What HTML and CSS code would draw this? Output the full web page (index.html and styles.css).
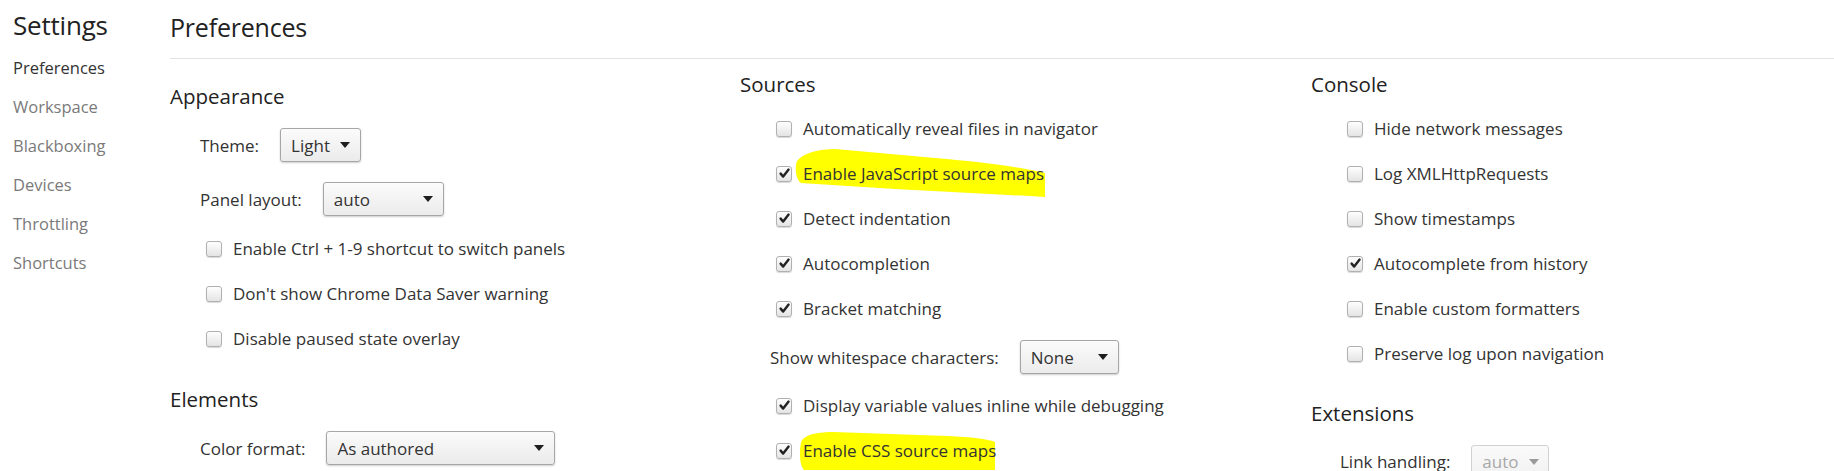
FILE: index.html
```html
<!DOCTYPE html>
<html>
<head>
<meta charset="utf-8">
<link rel="stylesheet" href="styles.css">
</head>
<body>
<div class="app">
  <nav class="sidebar">
    <div class="side-title">Settings</div>
    <ul class="side-list">
      <li class="active">Preferences</li>
      <li>Workspace</li>
      <li>Blackboxing</li>
      <li>Devices</li>
      <li>Throttling</li>
      <li>Shortcuts</li>
    </ul>
  </nav>
  <main class="main">
    <header class="header"><h1>Preferences</h1></header>
    <div class="columns">
      <section class="col col-first">
        <h2 class="sec-title">Appearance</h2>
        <div class="select-row tall">
          <span class="lbl">Theme:</span>
          <span class="select w-light"><span class="val">Light</span><span class="arrow"></span></span>
        </div>
        <div class="select-row tall">
          <span class="lbl">Panel layout:</span>
          <span class="select w-auto"><span class="val">auto</span><span class="arrow"></span></span>
        </div>
        <div class="check-row"><span class="cb"></span><span class="txt">Enable Ctrl + 1-9 shortcut to switch panels</span></div>
        <div class="check-row"><span class="cb"></span><span class="txt">Don't show Chrome Data Saver warning</span></div>
        <div class="check-row"><span class="cb"></span><span class="txt">Disable paused state overlay</span></div>
        <h2 class="sec-title sec-next">Elements</h2>
        <div class="select-row tall first-after">
          <span class="lbl">Color format:</span>
          <span class="select w-authored"><span class="val">As authored</span><span class="arrow"></span></span>
        </div>
      </section>

      <section class="col">
        <h2 class="sec-title">Sources</h2>
        <div class="check-row"><span class="cb"></span><span class="txt">Automatically reveal files in navigator</span></div>
        <div class="check-row"><span class="cb on"><svg viewBox="0 0 15 15"><path d="M3.6 7.6 L6.2 10.6 L11.6 3.6"/></svg></span><span class="txt hl hl-js">Enable JavaScript source maps<svg class="mark" viewBox="0 0 250 48" preserveAspectRatio="none"><path d="M2 12 C8 4 24 0 40 0 L140 9 C190 13 230 19 250 24 L250 48 C200 45 150 43 100 40 L6 34 C0 30 0 17 2 12 Z"/></svg></span></div>
        <div class="check-row"><span class="cb on"><svg viewBox="0 0 15 15"><path d="M3.6 7.6 L6.2 10.6 L11.6 3.6"/></svg></span><span class="txt">Detect indentation</span></div>
        <div class="check-row"><span class="cb on"><svg viewBox="0 0 15 15"><path d="M3.6 7.6 L6.2 10.6 L11.6 3.6"/></svg></span><span class="txt">Autocompletion</span></div>
        <div class="check-row"><span class="cb on"><svg viewBox="0 0 15 15"><path d="M3.6 7.6 L6.2 10.6 L11.6 3.6"/></svg></span><span class="txt">Bracket matching</span></div>
        <div class="select-row mid">
          <span class="lbl">Show whitespace characters:</span>
          <span class="select w-none"><span class="val">None</span><span class="arrow"></span></span>
        </div>
        <div class="check-row"><span class="cb on"><svg viewBox="0 0 15 15"><path d="M3.6 7.6 L6.2 10.6 L11.6 3.6"/></svg></span><span class="txt">Display variable values inline while debugging</span></div>
        <div class="check-row"><span class="cb on"><svg viewBox="0 0 15 15"><path d="M3.6 7.6 L6.2 10.6 L11.6 3.6"/></svg></span><span class="txt hl hl-css">Enable CSS source maps<svg class="mark" viewBox="0 0 198 42" preserveAspectRatio="none"><path d="M3 12 C8 6 20 4 35 4 L150 8 C175 9 190 11 198 14 L198 42 L5 42 C0 38 0 18 3 12 Z"/></svg></span></div>
      </section>

      <section class="col">
        <h2 class="sec-title">Console</h2>
        <div class="check-row"><span class="cb"></span><span class="txt">Hide network messages</span></div>
        <div class="check-row"><span class="cb"></span><span class="txt">Log XMLHttpRequests</span></div>
        <div class="check-row"><span class="cb"></span><span class="txt">Show timestamps</span></div>
        <div class="check-row"><span class="cb on"><svg viewBox="0 0 15 15"><path d="M3.6 7.6 L6.2 10.6 L11.6 3.6"/></svg></span><span class="txt">Autocomplete from history</span></div>
        <div class="check-row"><span class="cb"></span><span class="txt">Enable custom formatters</span></div>
        <div class="check-row"><span class="cb"></span><span class="txt">Preserve log upon navigation</span></div>
        <h2 class="sec-title sec-ext">Extensions</h2>
        <div class="select-row link-row">
          <span class="lbl">Link handling:</span>
          <span class="select disabled w-link"><span class="val">auto</span><span class="arrow"></span></span>
        </div>
      </section>
    </div>
  </main>
</div>
</body>
</html>
```

FILE: styles.css
```css
* { box-sizing: border-box; }
html, body { margin: 0; padding: 0; background: #fff; }
body {
  font-family: "Open Sans", "Noto Sans", Arial, sans-serif;
  color: #333;
  font-size: 17px;
  height: 471px;
  overflow: hidden;
}
.app { display: flex; }
.sidebar { width: 170px; flex: none; padding-left: 13px; }
.side-title {
  font-size: 26px;
  line-height: 30px;
  padding-top: 10px;
  color: #222;
  letter-spacing: -0.2px;
}
.side-list { list-style: none; margin: 0; padding: 0; margin-top: 8px; }
.side-list li {
  height: 39px;
  line-height: 39px;
  font-size: 16.5px;
  color: #7a7a7a;
}
.side-list li.active { color: #333; }

.main { flex: 1; min-width: 0; }
.header { border-bottom: 1px solid #e3e3e3; height: 59px; }
.header h1 {
  margin: 0;
  font-weight: 400;
  font-size: 25px;
  line-height: 30px;
  padding-top: 12px;
  color: #222;
  letter-spacing: -0.2px;
}
.columns { display: grid; grid-template-columns: 570px 571px 1fr; }
.col { display: flex; flex-direction: column; }
.sec-title {
  margin: 10px 0 7px 0;
  font-weight: 400;
  font-size: 20.5px;
  line-height: 30px;
  height: 30px;
  color: #222;
}
.col-first .sec-title:first-child { margin-top: 22px; margin-bottom: 7px; }
.sec-next { margin-top: 23px !important; margin-bottom: 0 !important; }
.sec-ext { margin-top: 22px; margin-bottom: 11px; }

.check-row {
  height: 45px;
  display: flex;
  align-items: center;
  padding-left: 36px;
}
.select-row {
  display: flex;
  align-items: center;
  padding-left: 30px;
}
.select-row.tall { height: 54px; }
.select-row.first-after { margin-top: 7px; }
.select-row.mid { height: 52px; }
.select-row.link-row { height: 45px; padding-left: 29px; }
.lbl { margin-right: 21px; white-space: nowrap; }

.cb {
  width: 16px;
  height: 16px;
  flex: none;
  border: 1px solid #b0b0b0;
  border-radius: 3px;
  background: linear-gradient(#fefefe, #e4e4e4);
  box-shadow: 0 1px 1px rgba(0,0,0,0.15);
  margin-right: 11px;
  display: flex;
  align-items: center;
  justify-content: center;
}
.cb svg { width: 15px; height: 15px; flex: none; }
.cb svg path { fill: none; stroke: #222; stroke-width: 2.4; stroke-linecap: round; stroke-linejoin: round; }
.txt { white-space: nowrap; }

.select {
  height: 34px;
  display: inline-flex;
  align-items: center;
  justify-content: space-between;
  border: 1px solid #a6a6a6;
  border-radius: 3px;
  background: linear-gradient(#fbfbfb, #ebebeb);
  box-shadow: 0 1px 2px rgba(0,0,0,0.2);
  padding: 0 10px 0 10px;
  color: #333;
}
.select .arrow {
  width: 0; height: 0;
  border-left: 5px solid transparent;
  border-right: 5px solid transparent;
  border-top: 6px solid #1e1e1e;
  margin-left: 10px;
}
.w-light { width: 81px; }
.w-auto { width: 121px; }
.w-authored { width: 229px; }
.w-none { width: 99px; }
.w-link { width: 78px; }
.select.disabled {
  color: #a8a8a8;
  border-color: #d2d2d2;
  background: linear-gradient(#fafafa, #f1f1f1);
  box-shadow: none;
}
.select.disabled .arrow { border-top-color: #9a9a9a; }

.hl { position: relative; z-index: 0; }
.hl .mark {
  position: absolute;
  z-index: -1;
  top: 50%;
}
.hl .mark path { fill: #ffff00; }
.hl-js .mark { left: -8px; width: calc(100% + 9px); height: 48px; margin-top: -25px; }
.hl-css .mark { left: -4px; width: calc(100% + 3px); height: 42px; margin-top: -23px; }
```
